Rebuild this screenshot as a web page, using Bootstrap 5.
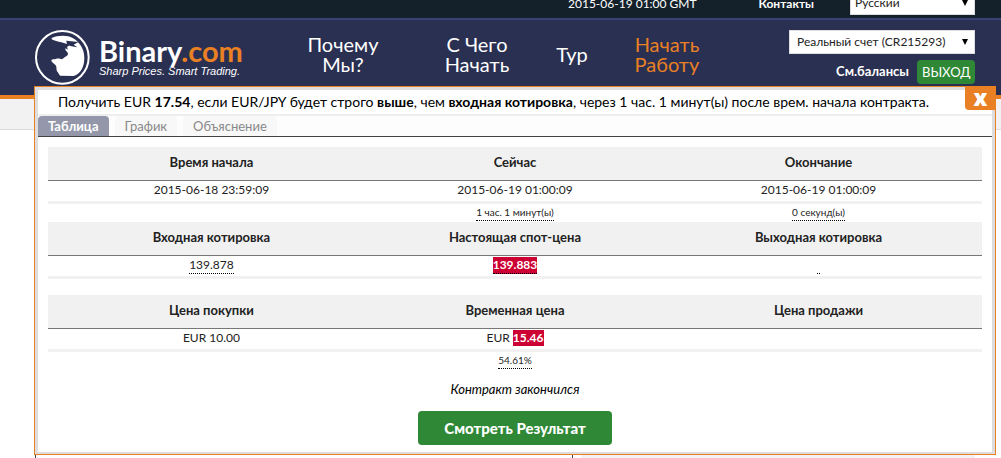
<!DOCTYPE html>
<html lang="ru">
<head>
<meta charset="utf-8">
<meta name="viewport" content="width=device-width, initial-scale=1">
<title>Binary.com</title>
<link href="https://cdn.jsdelivr.net/npm/bootstrap@5.3.0/dist/css/bootstrap.min.css" rel="stylesheet">
<style>
  body { font-family: Lato, "Open Sans", sans-serif; font-size: 13px; color: #222; background: #fff; }
  a { text-decoration: none; }
  .wrap { padding-left: 35px; padding-right: 26px; }

  /* top strip and header */
  .top-strip { height: 20px; overflow: hidden; background: #14212b; border-bottom: 2px solid #3a4375; font-size: 12px; color: #fff; }
  .top-strip .strip-text { line-height: 16px; padding-bottom: 6px; }
  .top-strip .strip-contact { margin-left: 62px; margin-right: 36px; }
  .main-head { background: #2a3052; border-bottom: 4px solid #e98024; min-height: 79px; }
  .plain-select { appearance: none; width: 100%; height: 24px; border: 1px solid #ddd; border-radius: 0; background: #fff; color: #222; font-size: 12px; padding: 0 20px 0 7px; }
  .pick { position: relative; }
  .pick::after { content: ""; position: absolute; right: 7px; top: 9px; border: 3px solid transparent; border-top: 6px solid #000; border-bottom: 0; pointer-events: none; }
  .pick-lang { width: 125px; margin-bottom: 3px; }
  .pick-lang .plain-select { padding-left: 4px; }
  .account { width: 186px; padding-top: 10px; gap: 6px; }
  .account .link-balance { color: #fff; font-weight: 700; }
  .btn-exit { background: #2e8836; color: #fff; font-size: 13px; line-height: 24px; padding: 0 5px; border: 0; border-radius: 4px; width: 58px; }
  .brand { gap: 9px; padding-top: 10px; color: #fff; }
  .brand-text { padding-top: 6px; }
  .brand-name { font-size: 29px; font-weight: 700; line-height: 29px; }
  .brand-name span { color: #e98024; }
  .brand-tag { font: italic 11px/12px "Liberation Sans", Arial, sans-serif; }
  .head-nav { font-size: 20px; line-height: 20px; padding-top: 14px; margin-right: 22px; }
  .head-nav a { color: #fff; text-align: center; width: 134px; }
  .head-nav .item-short { width: 56px; }
  .head-nav .item-hot { color: #e98024; }

  /* page under the dialog */
  .sub-strip { height: 31px; background: #f2f2f2; border-bottom: 1px solid #ddd; }
  .under { min-height: 328px; }
  .under-main { flex: 0 0 538px; border: solid #444; border-width: 0 1px; }
  .under-side { margin-left: 8px; background: #f2f2f2; }

  /* contract dialog */
  .deal { position: absolute; left: 34px; right: 5px; top: 86px; background: #fff; border: 1px solid #e98024; }
  .deal-inner { border: 3px solid #ddd; border-width: 3px 3px 2px; }
  .deal-title { font-size: 14px; line-height: 24px; color: #000; padding-left: 20px; border-bottom: 2px solid #eee; }
  .btn-x { position: absolute; right: -1px; top: -1px; width: 31px; height: 24px; border: 0; border-radius: 0 0 0 4px; background: #e98024; color: #fff; font: 800 22px/20px "Open Sans", sans-serif; padding: 0 0 2px; }
  .deal-tabs { gap: 6px; border-bottom: 1px solid #444; background: #fdfdfd; }
  .deal-tabs .nav-link { font-size: 13px; line-height: 20px; padding: 0 10px; border-radius: 4px 4px 0 0; color: #888; background: #f8f8f8; }
  .deal-tabs .nav-link.active { color: #fff; font-weight: 700; background: #9497a9; }
  .deal-body { padding: 10px 10px 7px; }
  .deal-grid { width: 100%; table-layout: fixed; border-collapse: collapse; text-align: center; font-size: 12px; }
  .deal-grid th { height: 33px; padding: 0 0 1px; background: #f1f1f1; border-bottom: 1px solid #777; text-align: center; font-size: 13px; }
  .deal-grid td { height: 22px; padding: 0; line-height: 18px; vertical-align: top; border-bottom: 3px solid #f1f1f1; }
  .deal-grid .row-note td { height: 20px; border: 0; font-size: 10px; line-height: 16px; }
  .deal-grid .row-gap td { height: 18px; border: 0; }
  .hint { display: inline-block; line-height: 16px; border-bottom: 1px dotted #000; }
  .drop { background: #cc0033; color: #fff; font-weight: 700; display: inline-block; line-height: 16px; }
  .done-note { font-size: 13px; line-height: 20px; color: #000; margin: 9px 0 12px; }
  .btn-result { background: #2e8836; color: #fff; font-size: 15px; font-weight: 900; line-height: 34px; padding: 0; width: 194px; border: 0; border-radius: 4px; }
</style>
</head>
<body>
<div class="position-relative overflow-hidden">
  <div class="top-strip">
    <div class="wrap h-100 d-flex justify-content-end align-items-end">
      <span class="strip-text">2015-06-19 01:00 GMT</span>
      <a href="#" class="strip-text strip-contact text-white fw-bold">Контакты</a>
      <div class="pick pick-lang"><select class="plain-select d-block" aria-label="Язык"><option>Русский</option></select></div>
    </div>
  </div>

  <header class="main-head">
    <div class="wrap d-flex justify-content-between align-items-start">
      <a href="#" class="brand d-flex">
        <svg width="55" height="55" viewBox="0 0 165 165" aria-hidden="true">
          <circle cx="82" cy="82" r="79" fill="none" stroke="#fff" stroke-width="6"/>
          <path fill="#fff" d="M50 24C68 16 97 15 113 24C134 35 148 58 148 83C148 112 137 130 116 138L76 137C71 134 70 128 66 124C63 118 66 111 62 106C57 101 49 97 49 91C50 86 58 89 64 86C73 85 77 88 81 88L90 81C96 77 101 74 98 68C94 62 90 62 91 55L99 59C94 50 98 47 104 47C94 38 66 36 50 28Z"/>
          <path fill="#2a3052" d="M94 32L130 36L116 44L127 52L109 49L96 44Z"/>
        </svg>
        <span class="brand-text">
          <span class="brand-name d-block">Binary<span>.com</span></span>
          <span class="brand-tag d-block">Sharp Prices. Smart Trading.</span>
        </span>
      </a>
      <nav class="head-nav d-flex align-items-center">
        <a href="#">Почему<br>Мы?</a>
        <a href="#">С Чего<br>Начать</a>
        <a href="#" class="item-short">Тур</a>
        <a href="#" class="item-hot">Начать<br>Работу</a>
      </nav>
      <div class="account d-flex flex-column">
        <div class="pick"><select class="plain-select d-block" aria-label="Счет"><option>Реальный счет (CR215293)</option></select></div>
        <div class="d-flex justify-content-end align-items-center gap-2">
          <a href="#" class="link-balance">См.балансы</a>
          <button type="button" class="btn btn-exit">ВЫХОД</button>
        </div>
      </div>
    </div>
  </header>

  <div class="sub-strip"></div>
  <main class="wrap under d-flex">
    <div class="under-main"></div>
    <div class="under-side flex-fill"></div>
  </main>

  <section class="deal" role="dialog" aria-labelledby="deal-title">
    <div class="deal-inner">
      <div class="deal-title text-nowrap" id="deal-title">Получить EUR <b>17.54</b>, если EUR/JPY будет строго <b>выше</b>, чем <b>входная котировка</b>, через 1 час. 1 минут(ы) после врем. начала контракта.</div>
      <nav class="deal-tabs nav">
        <a class="nav-link active" href="#">Таблица</a>
        <a class="nav-link" href="#">График</a>
        <a class="nav-link" href="#">Объяснение</a>
      </nav>
      <div class="deal-body text-center">
        <table class="deal-grid">
          <colgroup><col style="width:35%"><col style="width:30%"><col style="width:35%"></colgroup>
          <tbody>
            <tr><th>Время начала</th><th>Сейчас</th><th>Окончание</th></tr>
            <tr><td>2015-06-18 23:59:09</td><td>2015-06-19 01:00:09</td><td>2015-06-19 01:00:09</td></tr>
            <tr class="row-note"><td></td><td><span class="hint">1 час. 1 минут(ы)</span></td><td><span class="hint">0 секунд(ы)</span></td></tr>
            <tr><th>Входная котировка</th><th>Настоящая спот-цена</th><th>Выходная котировка</th></tr>
            <tr><td><span class="hint">139.878</span></td><td><span class="hint drop">139.883</span></td><td><span class="hint">&nbsp;</span></td></tr>
            <tr class="row-gap"><td colspan="3"></td></tr>
            <tr><th>Цена покупки</th><th>Временная цена</th><th>Цена продажи</th></tr>
            <tr><td>EUR 10.00</td><td>EUR <span class="drop">15.46</span></td><td></td></tr>
            <tr class="row-note"><td></td><td><span class="hint">54.61%</span></td><td></td></tr>
          </tbody>
        </table>
        <p class="done-note fst-italic">Контракт закончился</p>
        <button type="button" class="btn btn-result">Смотреть Результат</button>
      </div>
    </div>
    <button type="button" class="btn-x" aria-label="Закрыть">x</button>
  </section>
</div>
<script src="https://cdn.jsdelivr.net/npm/bootstrap@5.3.0/dist/js/bootstrap.bundle.min.js"></script>
</body>
</html>
